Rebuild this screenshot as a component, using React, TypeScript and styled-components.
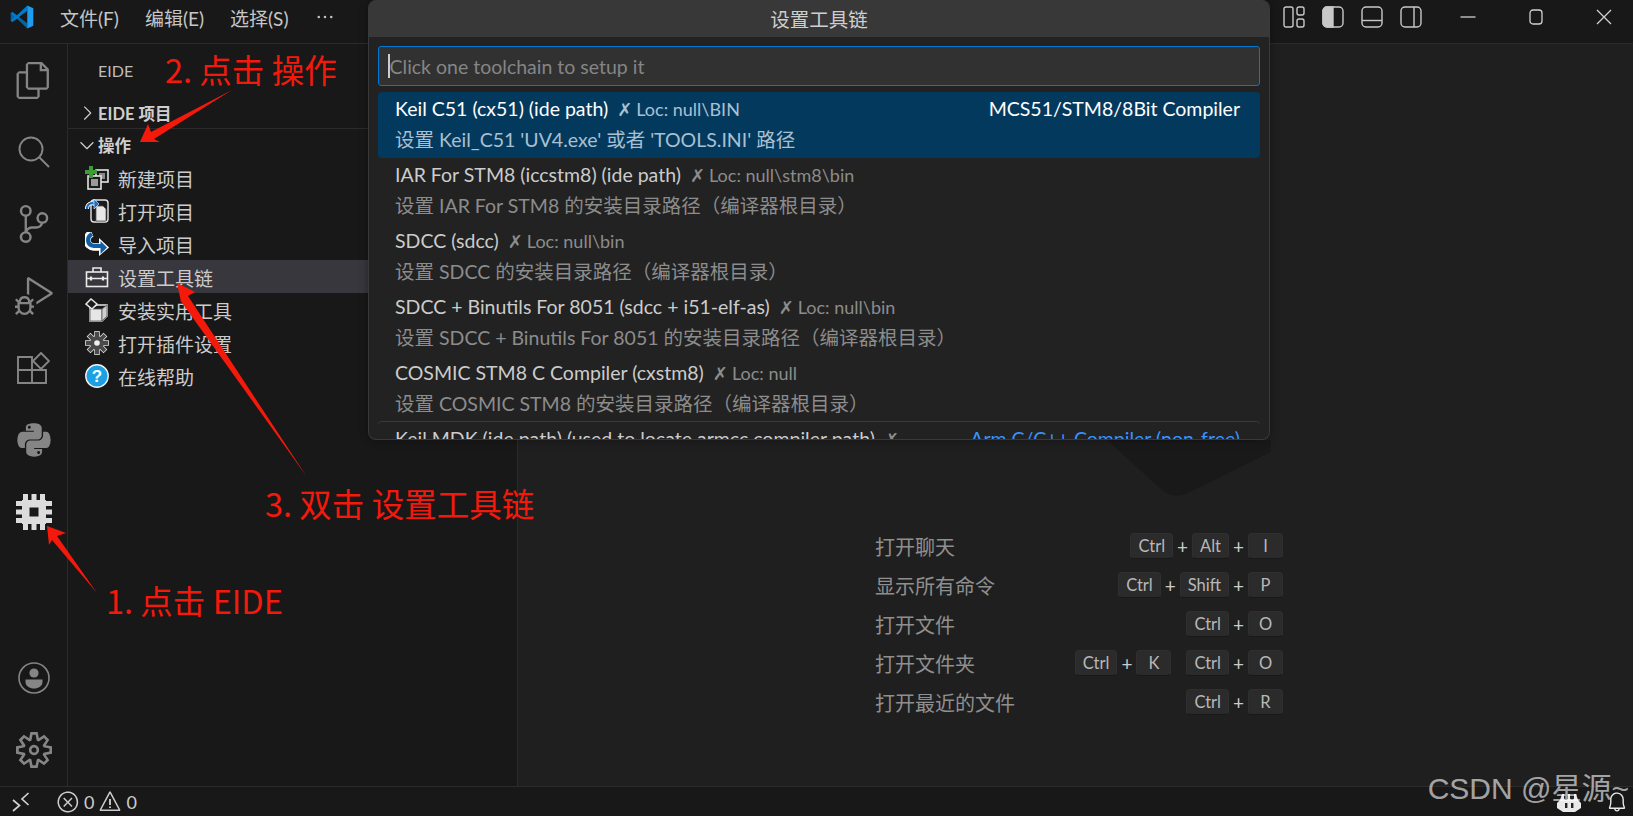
import React from 'react';
import styled, { createGlobalStyle } from 'styled-components';
import { VscFiles, VscSourceControl, VscDebugAlt, VscSettingsGear, VscChevronRight, VscChevronDown, VscError, VscWarning, VscBell, VscEllipsis } from 'react-icons/vsc';
import { FaPython } from 'react-icons/fa';

const UI_FONT = `Lato, "Noto Sans CJK SC", sans-serif`;
const CJK_FONT = `"Noto Sans CJK SC", sans-serif`;

const GlobalStyle = createGlobalStyle`
	html, body { margin: 0; padding: 0; background: #181818; }
	* { box-sizing: border-box; }
`;

// ---- small drawings ----
const Logo = () => (
	<svg width="24" height="24" viewBox="0 0 100 100">
		<path d="M3 34 L10 29 L72 76 L72 98 L28 56 L10 71 L3 66 Z" fill="#0065a9" />
		<path d="M3 66 L10 71 L72 24 L72 2 L28 44 L10 29 L3 34 L18 50 Z" fill="#007acc" />
		<path d="M72 2 L97 14 V86 L72 98 Z" fill="#1f9cf0" />
	</svg>
);

const Chip = () => (
	<svg width="36" height="36" viewBox="0 0 36 36">
		<path
			fillRule="evenodd"
			fill="#dcdcdc"
			d="M6 6h24v24H6zM13.5 13.5v9h9v-9z"
		/>
		{[7, 15.5, 24].map((p) => (
			<g key={p} fill="#dcdcdc">
				<rect x={p} y="0" width="5" height="7" />
				<rect x={p} y="29" width="5" height="7" />
				<rect x="0" y={p} width="7" height="5" />
				<rect x="29" y={p} width="7" height="5" />
			</g>
		))}
	</svg>
);

const SearchGlyph = () => (
	<svg width="32" height="32" viewBox="0 0 32 32" fill="none" stroke="#858585" strokeWidth="1.9">
		<circle cx="13" cy="13" r="11.5" />
		<path d="M21 21l10 10" />
	</svg>
);

const ExtensionsGlyph = () => (
	<svg width="33" height="33" viewBox="0 0 33 33" fill="none" stroke="#858585" strokeWidth="1.9">
		<path d="M1 5h14v26H1zM1 18h28v13H15" />
		<path d="M24 1l8 8-8 8-8-8z" />
	</svg>
);

const AccountGlyph = () => (
	<svg width="32" height="32" viewBox="0 0 32 32">
		<circle cx="16" cy="16" r="15" fill="none" stroke="#858585" strokeWidth="1.6" />
		<circle cx="16" cy="11" r="4.6" fill="#858585" />
		<path d="M7.5 17.5h17V20c0 4-4 6.5-8.5 6.5S7.5 24 7.5 20z" fill="#858585" />
	</svg>
);

const LayoutGlyph = ({ kind }: { kind: string }) => (
	<svg width="22" height="22" viewBox="0 0 22 22" fill="none" stroke="#c8c8c8" strokeWidth="1.4">
		{kind === 'custom' ? (
			<>
				<rect x="1" y="1" width="9" height="20" rx="2" />
				<rect x="14" y="1" width="7" height="8" rx="2" />
				<rect x="14" y="13" width="7" height="8" rx="2" />
			</>
		) : (
			<>
				<rect x="1" y="1" width="20" height="20" rx="4" />
				{kind === 'left' && <path d="M5 1h6v20H5a4 4 0 0 1-4-4V5a4 4 0 0 1 4-4z" fill="#c8c8c8" />}
				{kind === 'panel' && <path d="M1 14.5h20" />}
				{kind === 'right' && <path d="M14 1v20" />}
			</>
		)}
	</svg>
);

const WindowGlyph = ({ kind }: { kind: string }) => (
	<svg width="16" height="16" viewBox="0 0 16 16" fill="none" stroke="#d0d0d0" strokeWidth="1.3">
		{kind === 'min' && <path d="M0.5 8h15" />}
		{kind === 'max' && <rect x="2" y="1" width="12" height="14" rx="3" />}
		{kind === 'close' && <path d="M1 1l14 14M15 1L1 15" />}
	</svg>
);

const NewProjectIcon = () => (
	<svg width="24" height="24" viewBox="0 0 24 24">
		<rect x="11" y="4" width="12" height="12" fill="#1b1b1b" stroke="#e4e4e4" strokeWidth="1.6" />
		<rect x="14" y="7" width="6" height="6" fill="#8a8a8a" />
		<rect x="3" y="10" width="13" height="13" fill="#1b1b1b" stroke="#e4e4e4" strokeWidth="1.6" />
		<rect x="6" y="13" width="7" height="7" fill="#9a9a9a" />
		<path d="M4 0h4v4h4v4H8v4H4V8H0V4h4z" fill="#3f9c35" />
	</svg>
);

const OpenProjectIcon = () => (
	<svg width="24" height="24" viewBox="0 0 24 24">
		<rect x="6" y="1" width="17" height="22" rx="3" fill="#1b1b1b" stroke="#e4e4e4" strokeWidth="1.4" />
		<path d="M11 7h7l3 3v12H11z" fill="#e8e8e8" stroke="#555" strokeWidth="0.8" />
		<path d="M2 10c0-5 4-7 8-5" fill="none" stroke="#fff" strokeWidth="4" />
		<path d="M2 10c0-5 4-7 8-5" fill="none" stroke="#1b6fc0" strokeWidth="2.2" />
		<path d="M9 0l5 5-5 5z" fill="#1b6fc0" stroke="#fff" strokeWidth="0.6" />
	</svg>
);

const ImportProjectIcon = () => (
	<svg width="24" height="24" viewBox="0 0 24 24">
		<path d="M7 1C0 4 0 14 9 15h6" fill="none" stroke="#fff" strokeWidth="7.5" />
		<path d="M14 6l10 9.5L14 24z" fill="#fff" />
		<path d="M7 2C1.500 5 1.500 13 9 14h7" fill="none" stroke="#0f5fa8" strokeWidth="4.2" />
		<path d="M15.500 9l6.500 6.500-6.500 6.500z" fill="#0f5fa8" />
	</svg>
);

const ToolboxIcon = () => (
	<svg width="24" height="24" viewBox="0 0 24 24" fill="none" stroke="#eaeaea" strokeWidth="1.6">
		<rect x="1.5" y="7" width="21" height="14.5" />
		<path d="M8 7V3h8v4M1.5 13.5h21" />
		<path d="M6 11.5v4M18 11.5v4" strokeWidth="2.2" />
	</svg>
);

const PackageIcon = () => (
	<svg width="24" height="24" viewBox="0 0 24 24" stroke="#e8e8e8" strokeWidth="1.5">
		<path d="M5 10l7-3 10 0v11l-5 5H5z" fill="#1b1b1b" />
		<path d="M5 11h12v12H5z" fill="#e6e6e6" stroke="#555" strokeWidth="0.8" />
		<path d="M17 11l5-4v11l-5 5z" fill="#d0d0d0" stroke="#555" strokeWidth="0.8" />
		<path d="M1 6l5-5 6 5-5 5z" fill="#1b1b1b" />
	</svg>
);

const gearAngles = [0, 45, 90, 135, 180, 225, 270, 315];

const GearIcon = () => {
	const body = (
		<>
			{gearAngles.map((a) => (
				<rect key={a} x="10" y="0.800" width="4" height="6" transform={`rotate(${a} 12 12)`} />
			))}
			<circle cx="12" cy="12" r="7" />
		</>
	);
	return (
		<svg width="24" height="24" viewBox="0 0 24 24">
			<g fill="#ededed" stroke="#ededed" strokeWidth="1.4">{body}</g>
			<g fill="#4a4a4a">{body}</g>
			<circle cx="12" cy="12" r="2.800" fill="#f0f0f0" />
		</svg>
	);
};

const HelpIcon = () => (
	<svg width="24" height="24" viewBox="0 0 24 24">
		<circle cx="12" cy="12" r="11.2" fill="#1ba1e2" stroke="#f2f2f2" strokeWidth="1.4" />
		<text x="12" y="18" textAnchor="middle" fontSize="17" fontWeight="700" fontFamily="Liberation Sans, sans-serif" fill="#fff">?</text>
	</svg>
);

const CopilotGlyph = () => (
	<svg width="26" height="20" viewBox="0 0 26 20">
		<path d="M6 2h14l2 6 3 3v5l-6 4H7l-6-4v-5l3-3z" fill="#e9e9e9" />
		<rect x="8" y="1" width="4" height="7" rx="2" fill="#222" />
		<rect x="14" y="1" width="4" height="7" rx="2" fill="#222" />
		<rect x="9" y="11" width="2.4" height="5" fill="#222" />
		<rect x="15" y="11" width="2.4" height="5" fill="#222" />
	</svg>
);

const RemoteGlyph = () => (
	<svg width="18" height="20" viewBox="0 0 18 20" fill="none" stroke="#d0d0d0" strokeWidth="1.7">
		<path d="M1 8l6.500 5.500L1 19" />
		<path d="M16.500 1L10 7l6.500 6" />
	</svg>
);

// ---- page frame ----
const Shell = styled.div`
	position: relative;
	width: 1633px;
	height: 816px;
	display: flex;
	flex-direction: column;
	overflow: hidden;
	background: #181818;
	font-family: ${UI_FONT};
	color: #cccccc;
`;

const TitleBar = styled.header`
	height: 44px;
	flex: none;
	display: flex;
	align-items: flex-start;
	justify-content: space-between;
	padding: 5px 0 0 10px;
	border-bottom: 1px solid #2b2b2b;
`;

const MenuGroup = styled.nav`
	display: flex;
	align-items: center;
	height: 24px;
	gap: 25px;
	svg:first-child { margin-right: 1px; }
`;

const MenuItem = styled.span`
	font-size: 19px;
	color: #c6c6c6;
	width: 60px;
	white-space: nowrap;
`;

const TitleActions = styled.div`
	display: flex;
	align-items: center;
	height: 24px;
	margin-right: -5px;
`;

const LayoutButtons = styled.div`
	display: flex;
	gap: 17px;
	margin-right: 12px;
`;

const WindowButton = styled.span`
	width: 68px;
	display: flex;
	justify-content: center;
`;

const Body = styled.div`
	flex: 1;
	display: flex;
	min-height: 0;
`;

const ActivityBar = styled.aside`
	width: 68px;
	flex: none;
	display: flex;
	flex-direction: column;
	border-right: 1px solid #2b2b2b;
`;

const ActivityItem = styled.div`
	height: 72px;
	flex: none;
	display: flex;
	align-items: center;
	justify-content: center;
	color: #858585;
`;

const Spacer = styled.div`
	flex: 1;
`;

const SideBar = styled.aside`
	width: 450px;
	flex: none;
	border-right: 1px solid #2b2b2b;
`;

const SideTitle = styled.div`
	height: 53px;
	padding: 10px 0 0 30px;
	font-size: 16px;
	line-height: 34px;
	color: #bdbdbd;
`;

const SectionHeader = styled.div<{ $divider?: boolean }>`
	height: 32px;
	display: flex;
	align-items: center;
	padding-left: 8px;
	font-size: 16.5px;
	font-weight: 700;
	color: #cfcfcf;
	border-bottom: ${(p) => (p.$divider ? '1px solid #2b2b2b' : 'none')};
`;

const TreeRow = styled.div<{ $active?: boolean }>`
	height: 33px;
	display: flex;
	align-items: center;
	gap: 9px;
	padding: 1px 0 0 17px;
	font-family: ${CJK_FONT};
	font-size: 19px;
	color: #cccccc;
	background: ${(p) => (p.$active ? '#37373d' : 'transparent')};
`;

const Editor = styled.main`
	position: relative;
	flex: 1;
	background: #1f1f1f;
	padding: 489px 0 0 357px;
`;

const Letterpress = styled.svg`
	position: absolute;
	left: 589px;
	top: 396px;
`;

const Hints = styled.div`
	width: 408px;
	display: grid;
	grid-auto-rows: 39px;
`;

const HintRow = styled.div`
	display: flex;
	align-items: flex-start;
	justify-content: space-between;
`;

const HintLabel = styled.span`
	font-family: ${CJK_FONT};
	font-size: 20px;
	line-height: 27px;
	color: #8f8f8f;
`;

const Chords = styled.div`
	display: flex;
	gap: 15px;
`;

const Chord = styled.div`
	display: flex;
	align-items: center;
`;

const Key = styled.kbd`
	min-width: 35px;
	height: 26px;
	padding: 0 7px;
	display: flex;
	align-items: center;
	justify-content: center;
	font-family: ${UI_FONT};
	font-size: 16.5px;
	color: #b8b8b8;
	background: #2b2b2b;
	border-radius: 4px;
	border: 1px solid #2f2f2f;
	border-bottom-color: #181818;
`;

const Plus = styled.span`
	width: 19px;
	text-align: center;
	font-size: 19px;
	color: #cccccc;
`;

const StatusBar = styled.footer`
	height: 30px;
	flex: none;
	display: flex;
	align-items: center;
	padding-left: 12px;
	border-top: 1px solid #2b2b2b;
	font-size: 18px;
	color: #cccccc;
`;

const StatusGroup = styled.div`
	display: flex;
	align-items: center;
	gap: 4px;
	margin-left: 26px;
`;

const StatusRight = styled.div`
	margin-left: auto;
	display: flex;
	align-items: center;
	gap: 24px;
	padding-right: 5px;
`;

// ---- command palette ----
const QuickPick = styled.section`
	position: absolute;
	left: 368px;
	top: 0;
	width: 902px;
	height: 440px;
	background: #222222;
	border: 1px solid #3a3a3a;
	border-top: none;
	border-radius: 8px;
	box-shadow: 0 0 8px rgba(0, 0, 0, 0.36);
	overflow: hidden;
	z-index: 2;
`;

const PickTitle = styled.div`
	height: 37px;
	display: flex;
	align-items: center;
	justify-content: center;
	background: #383838;
	font-family: ${CJK_FONT};
	font-size: 19.5px;
	color: #cfcfcf;
`;

const PickInput = styled.div`
	height: 40px;
	margin: 9px 9px 6px;
	padding-left: 9px;
	display: flex;
	align-items: center;
	background: #313131;
	border: 1px solid #0078d4;
	border-radius: 3px;
`;

const Caret = styled.span`
	width: 1.5px;
	height: 24px;
	background: #cccccc;
`;

const Placeholder = styled.span`
	font-size: 19.5px;
	color: #858585;
`;

const PickList = styled.div`
	margin: 0 9px;
`;

const PickRow = styled.div<{ $active?: boolean; $divider?: boolean }>`
	position: relative;
	height: 66px;
	padding: 0 20px 0 17px;
	border-radius: 4px;
	background: ${(p) => (p.$active ? '#04395e' : 'transparent')};
	color: ${(p) => (p.$active ? '#ffffff' : '#cccccc')};
	box-shadow: ${(p) => (p.$divider ? '0 -1px 0 #3a3a3a' : 'none')};
`;

const PickLine = styled.div`
	height: 33px;
	display: flex;
	align-items: center;
	white-space: nowrap;
`;

const PickName = styled.span`
	font-size: 19.5px;
`;

const PickMeta = styled.span<{ $active?: boolean }>`
	margin-left: 9px;
	font-size: 18px;
	color: ${(p) => (p.$active ? '#a9c0d1' : '#8c8c8c')};
`;

const Cross = styled.span`
	font-family: "DejaVu Sans", sans-serif;
	font-weight: 700;
	margin-right: 4px;
`;

const PickTag = styled.span<{ $link?: boolean }>`
	margin-left: auto;
	font-size: 19.5px;
	color: ${(p) => (p.$link ? '#3794ff' : 'inherit')};
`;

const PickDetail = styled.div<{ $active?: boolean }>`
	height: 33px;
	line-height: 29px;
	font-size: 19.5px;
	white-space: nowrap;
	color: ${(p) => (p.$active ? '#a9c0d1' : '#8c8c8c')};
`;

// ---- red notes drawn on top of the screenshot ----
const NoteLayer = styled.svg`
	position: absolute;
	left: 0;
	top: 0;
	z-index: 3;
	pointer-events: none;
`;

const Note = styled.span<{ $x: number; $y: number }>`
	position: absolute;
	left: ${(p) => p.$x}px;
	top: ${(p) => p.$y}px;
	z-index: 3;
	font-family: ${CJK_FONT};
	font-size: 32.5px;
	line-height: 40px;
	color: #f5190c;
	white-space: nowrap;
`;

const Watermark = styled.span`
	position: absolute;
	right: 4px;
	top: 771px;
	z-index: 4;
	font-family: "Liberation Sans", "Noto Sans CJK SC", sans-serif;
	font-size: 30px;
	line-height: 36px;
	color: rgba(255, 255, 255, 0.62);
	white-space: nowrap;
`;

const toolchains = [
	{ name: 'Keil C51 (cx51) (ide path)', loc: 'Loc: null\\BIN', detail: "设置 Keil_C51 'UV4.exe' 或者 'TOOLS.INI' 路径", tag: 'MCS51/STM8/8Bit Compiler', active: true },
	{ name: 'IAR For STM8 (iccstm8) (ide path)', loc: 'Loc: null\\stm8\\bin', detail: '设置 IAR For STM8 的安装目录路径（编译器根目录）' },
	{ name: 'SDCC (sdcc)', loc: 'Loc: null\\bin', detail: '设置 SDCC 的安装目录路径（编译器根目录）' },
	{ name: 'SDCC + Binutils For 8051 (sdcc + i51-elf-as)', loc: 'Loc: null\\bin', detail: '设置 SDCC + Binutils For 8051 的安装目录路径（编译器根目录）' },
	{ name: 'COSMIC STM8 C Compiler (cxstm8)', loc: 'Loc: null', detail: '设置 COSMIC STM8 的安装目录路径（编译器根目录）' },
];

const treeItems = [
	{ label: '新建项目', icon: <NewProjectIcon /> },
	{ label: '打开项目', icon: <OpenProjectIcon /> },
	{ label: '导入项目', icon: <ImportProjectIcon /> },
	{ label: '设置工具链', icon: <ToolboxIcon />, active: true },
	{ label: '安装实用工具', icon: <PackageIcon /> },
	{ label: '打开插件设置', icon: <GearIcon /> },
	{ label: '在线帮助', icon: <HelpIcon /> },
];

const hints = [
	{ label: '打开聊天', chords: [['Ctrl', 'Alt', 'I']] },
	{ label: '显示所有命令', chords: [['Ctrl', 'Shift', 'P']] },
	{ label: '打开文件', chords: [['Ctrl', 'O']] },
	{ label: '打开文件夹', chords: [['Ctrl', 'K'], ['Ctrl', 'O']] },
	{ label: '打开最近的文件', chords: [['Ctrl', 'R']] },
];

export default function App() {
	return (
		<Shell>
			<GlobalStyle />
			<TitleBar>
				<MenuGroup>
					<Logo />
					<MenuItem>文件(F)</MenuItem>
					<MenuItem>编辑(E)</MenuItem>
					<MenuItem>选择(S)</MenuItem>
					<VscEllipsis size={20} color="#c6c6c6" />
				</MenuGroup>
				<TitleActions>
					<LayoutButtons>
						<LayoutGlyph kind="custom" />
						<LayoutGlyph kind="left" />
						<LayoutGlyph kind="panel" />
						<LayoutGlyph kind="right" />
					</LayoutButtons>
					<WindowButton><WindowGlyph kind="min" /></WindowButton>
					<WindowButton><WindowGlyph kind="max" /></WindowButton>
					<WindowButton><WindowGlyph kind="close" /></WindowButton>
				</TitleActions>
			</TitleBar>

			<Body>
				<ActivityBar>
					<ActivityItem><VscFiles size={37} /></ActivityItem>
					<ActivityItem><SearchGlyph /></ActivityItem>
					<ActivityItem><VscSourceControl size={38} /></ActivityItem>
					<ActivityItem><VscDebugAlt size={38} /></ActivityItem>
					<ActivityItem><ExtensionsGlyph /></ActivityItem>
					<ActivityItem><FaPython size={38} /></ActivityItem>
					<ActivityItem><Chip /></ActivityItem>
					<Spacer />
					<ActivityItem><AccountGlyph /></ActivityItem>
					<ActivityItem><VscSettingsGear size={36} /></ActivityItem>
				</ActivityBar>

				<SideBar>
					<SideTitle>EIDE</SideTitle>
					<SectionHeader $divider>
						<VscChevronRight size={22} />
						<span>EIDE 项目</span>
					</SectionHeader>
					<SectionHeader>
						<VscChevronDown size={22} />
						<span>操作</span>
					</SectionHeader>
					{treeItems.map((item) => (
						<TreeRow key={item.label} $active={item.active}>
							{item.icon}
							{item.label}
						</TreeRow>
					))}
				</SideBar>

				<Editor>
					<Letterpress width="164" height="60" viewBox="0 0 164 60">
						<path d="M0 0 L55 50 Q68 60 83 52 L164 12 V0 Z" fill="#191919" />
					</Letterpress>
					<Hints>
						{hints.map((hint) => (
							<HintRow key={hint.label}>
								<HintLabel>{hint.label}</HintLabel>
								<Chords>
									{hint.chords.map((chord, i) => (
										<Chord key={i}>
											{chord.map((k, j) => (
												<React.Fragment key={k}>
													{j > 0 && <Plus>+</Plus>}
													<Key>{k}</Key>
												</React.Fragment>
											))}
										</Chord>
									))}
								</Chords>
							</HintRow>
						))}
					</Hints>
				</Editor>
			</Body>

			<StatusBar>
				<RemoteGlyph />
				<StatusGroup>
					<VscError size={24} />
					<span>0</span>
					<VscWarning size={24} />
					<span>0</span>
				</StatusGroup>
				<StatusRight>
					<CopilotGlyph />
					<VscBell size={22} color="#eaeaea" />
				</StatusRight>
			</StatusBar>

			<QuickPick>
				<PickTitle>设置工具链</PickTitle>
				<PickInput>
					<Caret />
					<Placeholder>Click one toolchain to setup it</Placeholder>
				</PickInput>
				<PickList>
					{toolchains.map((t) => (
						<PickRow key={t.name} $active={t.active}>
							<PickLine>
								<PickName>{t.name}</PickName>
								<PickMeta $active={t.active}><Cross>✗</Cross>{t.loc}</PickMeta>
								{t.tag && <PickTag>{t.tag}</PickTag>}
							</PickLine>
							<PickDetail $active={t.active}>{t.detail}</PickDetail>
						</PickRow>
					))}
					<PickRow $divider>
						<PickLine>
							<PickName>Keil MDK (ide path) (used to locate armcc compiler path)</PickName>
							<PickMeta><Cross>✗</Cross></PickMeta>
							<PickTag $link>Arm C/C++ Compiler (non-free)</PickTag>
						</PickLine>
					</PickRow>
				</PickList>
			</QuickPick>

			<NoteLayer width="1633" height="816" viewBox="0 0 1633 816">
				<path d="M47 526 L66 533 L57 536 L97 593 L52 540 L49 545 Z" fill="#f5190c" />
				<path d="M140 142 L148 124 L151 132 L232 90 L154 139 L160 142 Z" fill="#f5190c" />
				<path d="M177 283 L195 292 L188 296 L307 477 L180 300 L181 302 Z" fill="#f5190c" />
			</NoteLayer>
			<Note $x={165} $y={49}>2. 点击 操作</Note>
			<Note $x={265} $y={483}>3. 双击 设置工具链</Note>
			<Note $x={106} $y={580}>1. 点击 EIDE</Note>
			<Watermark>CSDN @星源~</Watermark>
		</Shell>
	);
}
